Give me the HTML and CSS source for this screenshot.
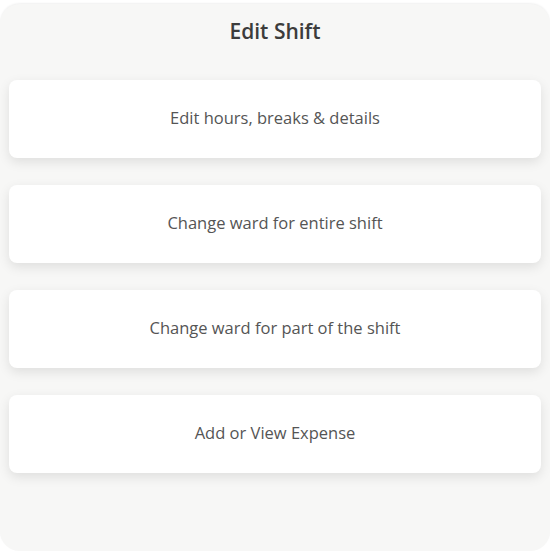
FILE: index.html
```html
<!DOCTYPE html>
<html lang="en">
<head>
  <meta charset="UTF-8" />
  <meta name="viewport" content="width=device-width, initial-scale=1.0"/>
  <title>Edit Shift</title>
  <link rel="stylesheet" href="styles.css">
</head>
<body>

  <div class="sheet">
    <h1 class="sheet-title">Edit Shift</h1>

    <div class="options">
      <button class="option">Edit hours, breaks &amp; details</button>
      <button class="option">Change ward for entire shift</button>
      <button class="option">Change ward for part of the shift</button>
      <button class="option">Add or View Expense</button>
    </div>
  </div>

</body>
</html>
```

FILE: styles.css
```css
body {
  margin: 0;
  background: #ffffff;
  font-family: 'Open Sans', Lato, sans-serif;
}
.sheet {
  margin-top: 4px;
  height: 547px;
  box-sizing: border-box;
  background-color: #f7f7f6;
  border-radius: 20px;
  box-shadow: 0 -1px 2px rgba(0,0,0,0.06);
  padding: 0 9px;
}
.sheet-title {
  margin: 0;
  padding: 13px 0 35px;
  text-align: center;
  font-size: 21px;
  line-height: 28px;
  font-weight: 600;
  color: #3c3c3c;
}
.options {
  display: flex;
  flex-direction: column;
  gap: 27px;
}
.option {
  height: 78px;
  padding-bottom: 5px;
  border: none;
  border-radius: 8px;
  background-color: white;
  box-shadow: 0 4px 12px rgba(0,0,0,0.10);
  font-family: inherit;
  font-size: 16.5px;
  color: #555555;
  cursor: pointer;
}
```
